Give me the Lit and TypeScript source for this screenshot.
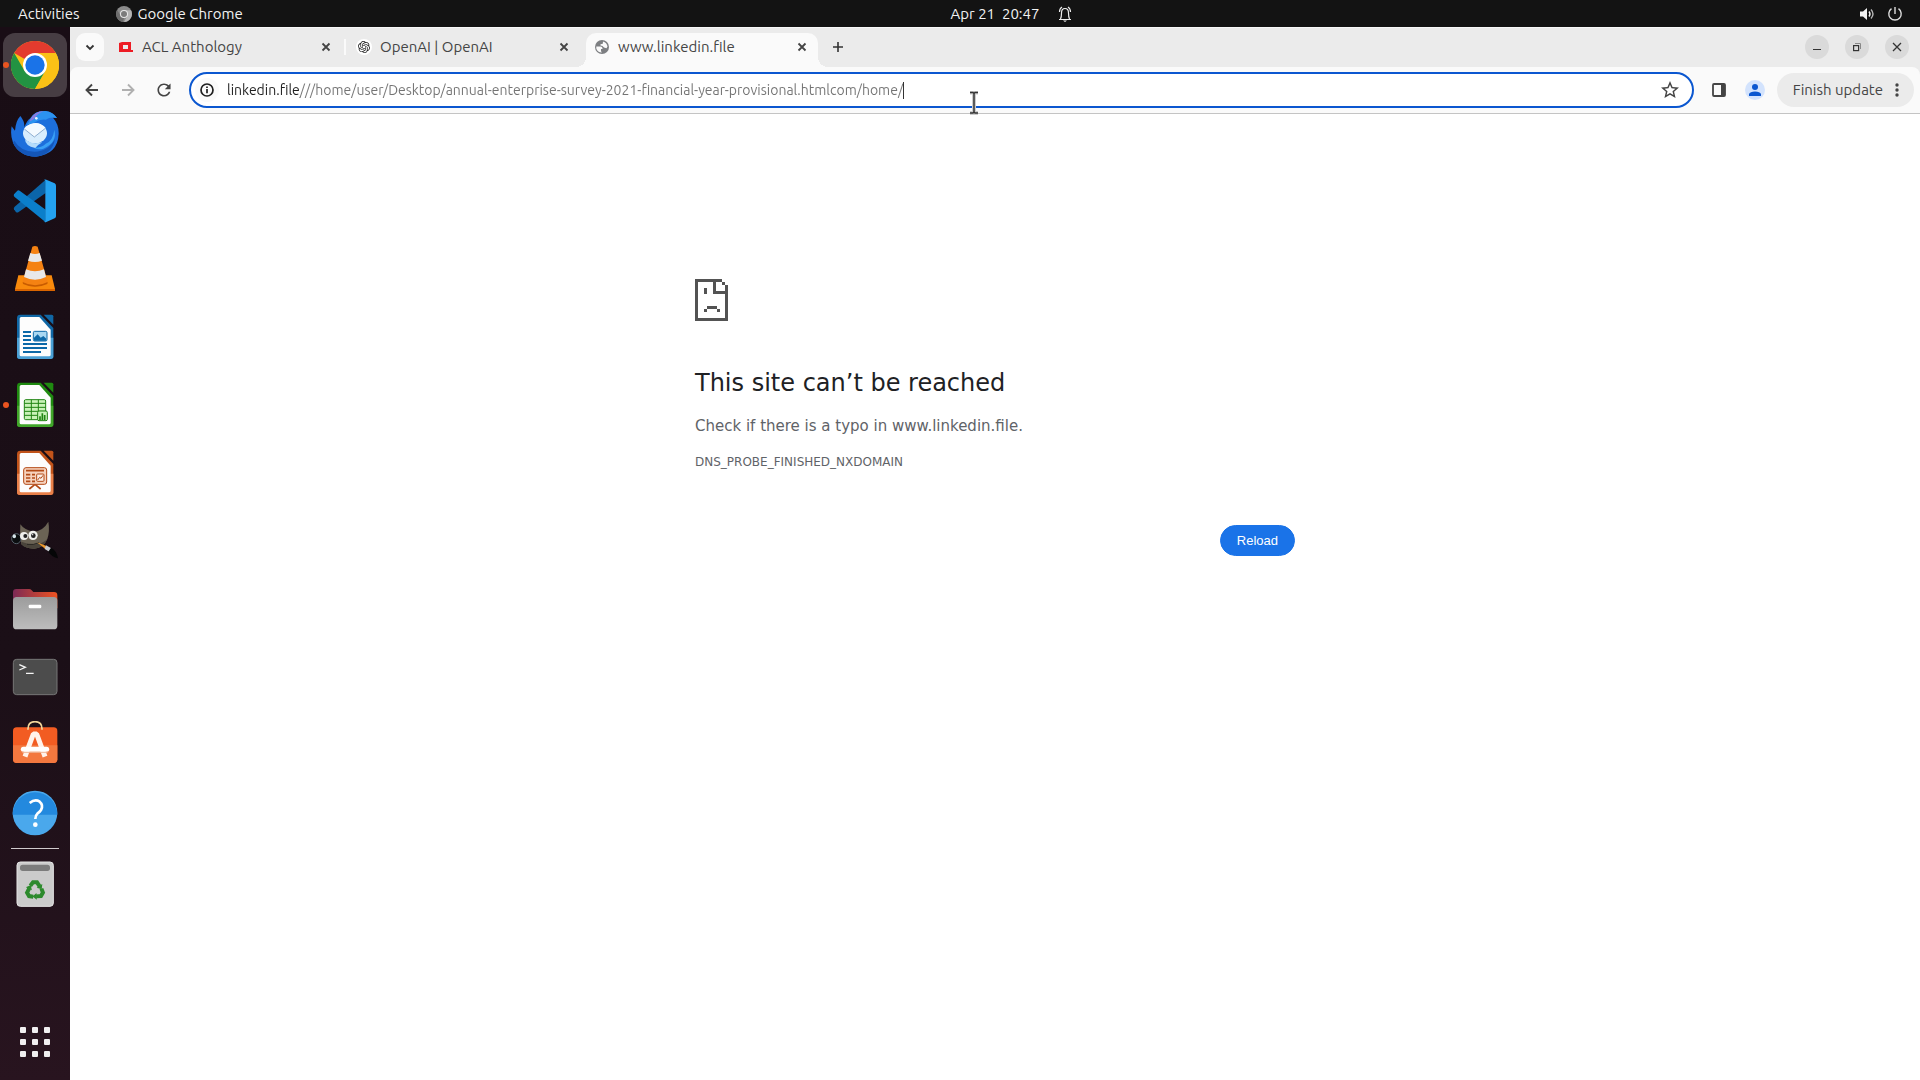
import { LitElement, html, css } from "lit";
import { customElement } from "lit/decorators.js";
import { classMap } from "lit/directives/class-map.js";

const documentIcon = (edge: string, light: string, body: unknown) => html`
  <svg viewBox="0 0 144 144" aria-hidden="true">
    <path d="M28 5H89L127 45V130Q127 138 119 138H26Q18 138 18 130V15Q18 5 28 5Z" fill=${edge} />
    <path d="M18 74H127V130Q127 138 119 138H26Q18 138 18 130Z" fill=${light} />
    <path d="M31 12H85L119 50V125Q119 130 114 130H31Q26 130 26 125V17Q26 12 31 12Z" fill="#fdfdfd" />
    <path d="M98 5H122Q127 5 127 10V35Z" fill=${edge} />
    ${body}
  </svg>
`;

const chromeIcon = html`
  <svg viewBox="0 0 144 144" aria-hidden="true">
    <circle cx="72" cy="72" r="72" fill="#fbc116" />
    <path d="M72 72L9.6 36A72 72 0 0 1 134.4 36H72Z" fill="#e33b2e" />
    <path d="M9.6 36L40.8 90L103.200 90L72 144A72 72 0 0 1 9.6 36Z" fill="#229342" />
    <path d="M134.400 36A72 72 0 0 1 72 144L103.200 90L72 36Z" fill="#fbc116" />
    <circle cx="72" cy="72" r="36" fill="#fff" />
    <circle cx="72" cy="72" r="29" fill="#1a73e8" />
  </svg>
`;

const thunderbirdIcon = html`
  <svg viewBox="0 0 144 144" aria-hidden="true">
    <path d="M28 21Q42 38 40 55Q48 34 58 28Q72 4 104 6Q126 9 138 27L126 26Q144 46 143 75Q140 136 75 143Q25 142 6 101Q-3 77 2 52L12 65Q14 36 28 21Z" fill="#1d6fdc" />
    <path d="M59 27Q73 4 104 6Q126 9 138 27Q118 23 104 32Q86 30 68 42L47 47Q58 38 59 27Z" fill="#2c93f0" />
    <path d="M57 33Q70 6 98 7Q78 14 70 29Q62 35 54 37Z" fill="#8a7be0" />
    <path d="M10 95Q28 127 70 128Q113 127 132 90Q124 137 75 143Q25 142 6 101Z" fill="#1456b8" />
    <path d="M104 104Q126 96 130 62Q140 100 97 119Q82 124 68 116Q94 116 104 104Z" fill="#3aa0f5" />
    <circle cx="76" cy="28" r="4" fill="#e8f4ff" />
    <ellipse cx="72" cy="73" rx="36" ry="30" fill="#d8edfd" />
    <path d="M42 90Q60 108 94 100Q79 108 73 117Q42 111 42 90Z" fill="#b5dcfa" />
    <path d="M39 60L70 84L104 57Q85 36 60 45Q45 50 39 60Z" fill="#f4faff" />
    <path d="M40 60L70 84L103 58" fill="none" stroke="#8eaed0" stroke-width="3" />
  </svg>
`;

const codeIcon = html`
  <svg viewBox="0 0 144 144" aria-hidden="true">
    <path d="M104 8V48L22 106Q18 108 14 104L9 97Q7 93 11 89Z" fill="#0b65a9" />
    <path d="M9 52L19 41Q22 38 27 42L104 98V136L10 59Q7 56 9 52Z" fill="#0b7fcb" />
    <path d="M98 9Q101 6 106 8L131 19Q135 21 135 26V118Q135 122 131 124L106 135Q101 137 98 133Q103 136 103 130V13Q103 8 98 9Z" fill="#24a2f0" />
  </svg>
`;

const vlcIcon = html`
  <svg viewBox="0 0 144 144" aria-hidden="true">
    <path d="M22 91H122L132 132V138H12V132Z" fill="#f98a0c" />
    <path d="M12 132H132V138H12Z" fill="#d96400" />
    <path d="M64 5Q72 1 80 5L110 111Q92 125 72 125Q52 125 35 111Z" fill="#f58212" />
    <path d="M58 24Q72 30 86 24L93 47Q72 55 51 47Z" fill="#e8e8e8" />
    <path d="M45 73Q72 85 99 73L105 96Q72 112 39 96Z" fill="#e8e8e8" />
    <path d="M35 111Q72 131 110 111L109 117Q72 134 36 117Z" fill="#c85c00" />
  </svg>
`;

const writerIcon = documentIcon("#1067a5", "#4a9fd4", html`
  <svg viewBox="0 0 144 144">
    <path d="M36 57H60M36 69H60M36 81H60M36 93H108M36 105H108M36 117H90" stroke="#0d69a8" stroke-width="6" />
    <rect x="67" y="55" width="41" height="29" rx="4" fill="#a9d8f2" stroke="#0d69a8" stroke-width="3" />
    <path d="M69 81V74L80 64L89 74L97 69L106 77V83H69Z" fill="#0d69a8" />
  </svg>
`);

const calcIcon = documentIcon("#1f8a10", "#41a62a", html`
  <svg viewBox="0 0 144 144">
    <rect x="40" y="56" width="64" height="60" rx="4" fill="#c9f2b8" stroke="#208413" stroke-width="3" />
    <path d="M40 67H104M40 79H104M40 91H104M40 103H104M61 56V116M82 56V116" stroke="#208413" stroke-width="3" />
    <rect x="80" y="90" width="29" height="29" rx="4" fill="#c9f2b8" stroke="#208413" stroke-width="3" />
    <path d="M87 117V106M94 117V97M101 117V102" stroke="#208413" stroke-width="5" />
  </svg>
`);

const impressIcon = documentIcon("#c1531a", "#e8804a", html`
  <svg viewBox="0 0 144 144">
    <path d="M72 106L55 120M72 106L89 120" stroke="#b34a17" stroke-width="5" />
    <rect x="38" y="56" width="69" height="50" rx="7" fill="#f6d2bd" stroke="#b34a17" stroke-width="3" />
    <path d="M45 65H99M45 77H58M45 87H58M45 97H58M63 77H72M63 87H72M63 97H72" stroke="#b34a17" stroke-width="5" />
    <rect x="77" y="75" width="22" height="22" rx="3" fill="#fbeee6" stroke="#b34a17" stroke-width="3" />
    <path d="M80 93L86 85L90 88L96 79" fill="none" stroke="#b34a17" stroke-width="3" />
  </svg>
`);

const gimpIcon = html`
  <svg viewBox="0 0 144 144" aria-hidden="true">
    <path d="M28 22Q40 39 67 44Q96 43 112 14Q117 42 109 66Q98 93 70 95Q46 96 31 82Q25 50 28 22Z" fill="#6b6355" />
    <path d="M31 82Q46 96 70 95Q98 93 109 66Q94 82 70 82Q50 82 31 74Z" fill="#4a443b" />
    <ellipse cx="16" cy="65" rx="14" ry="15" fill="#0b0e10" stroke="#55606a" stroke-width="3" />
    <ellipse cx="10" cy="58" rx="5" ry="6" fill="#d7e4ea" />
    <circle cx="39" cy="57" r="12" fill="#f0f0ec" />
    <circle cx="66" cy="55" r="14" fill="#f0f0ec" />
    <circle cx="43" cy="57" r="6" fill="#222" />
    <circle cx="67" cy="56" r="7" fill="#222" />
    <circle cx="65" cy="53" r="2" fill="#fff" />
    <path d="M48 82Q68 85 84 77" fill="none" stroke="#2a2722" stroke-width="3" />
    <path d="M78 76L108 88L103 96Z" fill="#ef9a2c" />
    <path d="M105 85L121 94L115 104L101 96Z" fill="#c9cdd2" />
    <path d="M120 92Q137 100 141 124Q122 119 112 104Z" fill="#050607" />
  </svg>
`;

const filesIcon = html`
  <svg viewBox="0 0 144 144" aria-hidden="true">
    <defs>
      <linearGradient id="folder-back"><stop offset="0" stop-color="#7c2a55" /><stop offset="1" stop-color="#ee5322" /></linearGradient>
      <linearGradient id="folder-front" x2="0" y2="1"><stop offset="0" stop-color="#9c9c9c" /><stop offset="1" stop-color="#bdbdbd" /></linearGradient>
    </defs>
    <path d="M16 12H54Q59 12 62 16L67 21H129Q139 21 139 31V70H6V22Q6 12 16 12Z" fill="url(#folder-back)" />
    <rect x="6" y="36" width="133" height="97" rx="11" fill="url(#folder-front)" />
    <rect x="53" y="59" width="38" height="11" rx="4" fill="#fff" />
  </svg>
`;

const terminalIcon = html`
  <svg viewBox="0 0 144 144" aria-hidden="true">
    <rect x="7" y="19" width="131" height="106" rx="10" fill="#4c4c4c" stroke="#767676" stroke-width="3" />
    <path d="M25 35L43 43L25 51M45 61H68" fill="none" stroke="#f4f4f4" stroke-width="4" />
  </svg>
`;

const softwareIcon = html`
  <svg viewBox="0 0 144 144" aria-hidden="true">
    <rect x="6" y="19" width="133" height="107" rx="11" fill="#f25c22" />
    <path d="M6 73H139V115Q139 126 128 126H17Q6 126 6 115Z" fill="#f3783f" />
    <path d="M51 26Q50 2 72 2Q94 2 93 26" fill="none" stroke="#f3d79b" stroke-width="5" />
    <path d="M42 107L67 39H77L102 107" fill="none" stroke="#fff3ec" stroke-width="15" stroke-linejoin="bevel" />
    <path d="M37 85H107" stroke="#fff" stroke-width="15" stroke-linecap="round" />
    <path d="M34 94H110" stroke="#f0b596" stroke-width="3" />
  </svg>
`;

const helpIcon = html`
  <svg viewBox="0 0 144 144" aria-hidden="true">
    <circle cx="72" cy="72" r="67" fill="#4aa8ec" />
    <path d="M5 77A67 67 0 1 1 139 77Z" fill="#2389de" />
    <path d="M56 42Q72 29 86 38Q98 48 90 63Q87 68 79 74Q73 79 73 90" fill="none" stroke="#fff" stroke-width="8" />
    <circle cx="73" cy="107" r="7" fill="#fff" />
  </svg>
`;

const trashIcon = html`
  <svg viewBox="0 0 144 144" aria-hidden="true">
    <rect x="18" y="6" width="109" height="133" rx="10" fill="#cbcbcb" stroke="#e6e6e6" stroke-width="3" />
    <rect x="27" y="14" width="90" height="19" rx="8" fill="#7c7c7c" />
    <g fill="none" stroke="#2c8a2c" stroke-width="12">
      <path d="M58 77L66 67H78L86 79" />
      <path d="M58 77L66 67H78L86 79" transform="rotate(120 72 91)" />
      <path d="M58 77L66 67H78L86 79" transform="rotate(240 72 91)" />
    </g>
    <g fill="#2c8a2c">
      <path d="M94 72L92 88L77 83Z" />
      <path d="M94 72L92 88L77 83Z" transform="rotate(120 72 91)" />
      <path d="M94 72L92 88L77 83Z" transform="rotate(240 72 91)" />
    </g>
  </svg>
`;

const closeIcon = html`
  <svg class="glyph" viewBox="0 0 16 16" aria-hidden="true">
    <path d="M4.500 4.500L11.500 11.500M11.500 4.500L4.500 11.500" stroke="#444" stroke-width="1.800" />
  </svg>
`;

const aclIcon = html`
  <svg class="glyph" viewBox="0 0 16 16" aria-hidden="true">
    <path d="M1 4L4 3H13V11H15V13H1ZM5 6V10H10V6Z" fill="#ed1c24" fill-rule="evenodd" />
  </svg>
`;

const openaiIcon = html`
  <svg class="glyph" viewBox="0 0 16 16" aria-hidden="true">
    <circle cx="8" cy="8" r="8" fill="#fff" />
    <path
      transform="translate(2 2) scale(0.500)"
      fill="#222"
      d="M22.2819 9.8211a5.9847 5.9847 0 0 0-.5157-4.9108 6.0462 6.0462 0 0 0-6.5098-2.9A6.0651 6.0651 0 0 0 4.9807 4.1818a5.9847 5.9847 0 0 0-3.9977 2.9 6.0462 6.0462 0 0 0 .7427 7.0966 5.98 5.98 0 0 0 .511 4.9107 6.051 6.051 0 0 0 6.5146 2.9001A5.9847 5.9847 0 0 0 13.2599 24a6.0557 6.0557 0 0 0 5.7718-4.2058 5.9894 5.9894 0 0 0 3.9977-2.9001 6.0557 6.0557 0 0 0-.7475-7.0729zm-9.022 12.6081a4.4755 4.4755 0 0 1-2.8764-1.0408l.1419-.0804 4.7783-2.7582a.7948.7948 0 0 0 .3927-.6813v-6.7369l2.02 1.1686a.071.071 0 0 1 .038.052v5.5826a4.504 4.504 0 0 1-4.4945 4.4944zm-9.6607-4.1254a4.4708 4.4708 0 0 1-.5346-3.0137l.142.0852 4.783 2.7582a.7712.7712 0 0 0 .7806 0l5.8428-3.3685v2.3324a.0804.0804 0 0 1-.0332.0615L9.74 19.9502a4.4992 4.4992 0 0 1-6.1408-1.6464zM2.3408 7.8956a4.485 4.485 0 0 1 2.3655-1.9728V11.6a.7664.7664 0 0 0 .3879.6765l5.8144 3.3543-2.0201 1.1685a.0757.0757 0 0 1-.071 0l-4.8303-2.7865A4.504 4.504 0 0 1 2.3408 7.872zm16.5963 3.8558L13.1038 8.364 15.1192 7.2a.0757.0757 0 0 1 .071 0l4.8303 2.7913a4.4944 4.4944 0 0 1-.6765 8.1042v-5.6772a.79.79 0 0 0-.407-.667zm2.0107-3.0231l-.142-.0852-4.7735-2.7818a.7759.7759 0 0 0-.7854 0L9.409 9.2297V6.8974a.0662.0662 0 0 1 .0284-.0615l4.8303-2.7866a4.4992 4.4992 0 0 1 6.6802 4.66zM8.3065 12.863l-2.02-1.1638a.0804.0804 0 0 1-.038-.0567V6.0742a4.4992 4.4992 0 0 1 7.3757-3.4537l-.142.0805L8.704 5.459a.7948.7948 0 0 0-.3927.6813zm1.0976-2.3654l2.602-1.4998 2.6069 1.4998v2.9994l-2.5974 1.4997-2.6067-1.4997Z"
    />
  </svg>
`;

const globeIcon = html`
  <svg class="glyph" viewBox="0 0 16 16" aria-hidden="true">
    <circle cx="8" cy="8" r="7" fill="#7d7f82" />
    <path d="M2.300 7.500H6.500Q8.500 7.500 8.500 9.500V10H7V12.300L8 13.500Q3.500 13.500 2.300 9.500Z" fill="#fafafa" />
    <path d="M9 2.500Q12.800 3.600 13.500 7.500L12.500 9.300L10 8.500L8.500 7L6.500 6.500V5.300L8.800 4.800Z" fill="#fafafa" />
  </svg>
`;

interface DockApp { name: string; icon: unknown; active?: boolean; running?: boolean }
interface Tab { title: string; icon: unknown; active?: boolean }

const apps: DockApp[] = [
  { name: "Google Chrome", icon: chromeIcon, active: true, running: true },
  { name: "Thunderbird Mail", icon: thunderbirdIcon },
  { name: "Visual Studio Code", icon: codeIcon },
  { name: "VLC media player", icon: vlcIcon },
  { name: "LibreOffice Writer", icon: writerIcon },
  { name: "LibreOffice Calc", icon: calcIcon, running: true },
  { name: "LibreOffice Impress", icon: impressIcon },
  { name: "GIMP", icon: gimpIcon },
  { name: "Files", icon: filesIcon },
  { name: "Terminal", icon: terminalIcon },
  { name: "Ubuntu Software", icon: softwareIcon },
  { name: "Help", icon: helpIcon },
];

const tabs: Tab[] = [
  { title: "ACL Anthology", icon: aclIcon },
  { title: "OpenAI | OpenAI", icon: openaiIcon },
  { title: "www.linkedin.file", icon: globeIcon, active: true },
];

const shared = css`
  :host, * { box-sizing: border-box; }
  button {
    margin: 0;
    padding: 0;
    border: 0;
    background: none;
    color: inherit;
    font: inherit;
    display: flex;
    align-items: center;
    justify-content: center;
    flex: none;
  }
  svg { display: block; }
`;

@customElement("system-bar")
class SystemBar extends LitElement {
  static styles = [shared, css`
    :host {
      display: grid;
      grid-template-columns: 1fr auto 1fr;
      align-items: center;
      height: 27px;
      background: #131313;
      color: #f2f2f2;
      font-size: 15px;
      line-height: 20px;
    }
    .left { display: flex; gap: 36px; padding-left: 18px; }
    .app { gap: 6px; }
    .center { gap: 18px; padding-left: 104px; white-space: pre; }
    .right { justify-self: end; gap: 12px; padding-right: 17px; }
  `];

  render() {
    return html`
      <div class="left">
        <button>Activities</button>
        <button class="app">
          <svg width="16" height="16" viewBox="0 0 16 16" aria-hidden="true">
            <circle cx="8" cy="8" r="8" fill="#8b8b8b" />
            <path d="M8 4.200H15A8 8 0 0 1 8 16L11.300 10Z" fill="#b5b5b5" />
            <path d="M1.200 4L4.700 10L8 12L7 16A8 8 0 0 1 1.200 4Z" fill="#6d6d6d" />
            <circle cx="8" cy="8" r="4" fill="#e8e8e8" />
            <circle cx="8" cy="8" r="3" fill="#7b7b7b" />
          </svg>
          Google Chrome
        </button>
      </div>
      <button class="center">Apr 21  20:47<svg width="16" height="16" viewBox="0 0 16 16" aria-hidden="true">
          <path d="M2 13.500H14M3.500 13Q4.500 11 4.500 7Q4.500 2.500 8 2.500Q11.500 2.500 11.500 7Q11.500 11 12.500 13M2.500 6Q2.500 2.500 5 1M13.500 6Q13.500 2.500 11 1" fill="none" stroke="#eee" stroke-width="1.200" />
          <path d="M6 14.500H10L8 16Z" fill="#eee" />
        </svg></button>
      <button class="right" aria-label="System menu">
        <svg width="16" height="16" viewBox="0 0 16 16" aria-hidden="true">
          <path d="M1 5.500H4L8 2V14L4 10.500H1Z" fill="#f2f2f2" />
          <path d="M10 5.500Q12 8 10 10.500" fill="none" stroke="#f2f2f2" stroke-width="1.400" />
          <path d="M12 3.500Q16 8 12 12.500" fill="none" stroke="#b5b5b5" stroke-width="1.400" />
        </svg>
        <svg width="16" height="16" viewBox="0 0 16 16" aria-hidden="true">
          <path d="M4.500 2.700A6.200 6.200 0 1 0 11.500 2.700M8 1V8" fill="none" stroke="#ddd" stroke-width="1.400" />
        </svg>
      </button>
    `;
  }
}

@customElement("app-dock")
class AppDock extends LitElement {
  static styles = [shared, css`
    :host {
      display: flex;
      flex-direction: column;
      width: 70px;
      padding: 4px 0;
      background: linear-gradient(#190d15, #1b0f17 60%, #28141f);
    }
    .slot { position: relative; display: flex; justify-content: center; padding: 2px 0; }
    .tile { width: 64px; height: 64px; border-radius: 12px; }
    .tile > svg { width: 48px; height: 48px; }
    .tile.active { background: #473d43; }
    .dot {
      position: absolute;
      left: 3px;
      top: 31px;
      width: 6px;
      height: 6px;
      border-radius: 50%;
      background: #e95420;
    }
    .rule { height: 1px; margin: 1px 11px; background: #cfcbcd; }
    .spacer { flex: 1; }
  `];

  render() {
    return html`
      ${apps.map((app) => html`
        <div class="slot">
          <button class=${classMap({ tile: true, active: !!app.active })} aria-label=${app.name}>${app.icon}</button>
          ${app.running ? html`<span class="dot"></span>` : null}
        </div>
      `)}
      <div class="rule"></div>
      <div class="slot"><button class="tile" aria-label="Trash">${trashIcon}</button></div>
      <div class="spacer"></div>
      <div class="slot">
        <button class="tile" aria-label="Show Applications">
          <svg viewBox="0 0 48 48" aria-hidden="true">
            ${[9, 21, 33].map((y) => [9, 21, 33].map((x) => html`<svg><rect x=${x} y=${y} width="6" height="6" rx="1" fill="#f1eff0" /></svg>`))}
          </svg>
        </button>
      </div>
    `;
  }
}

@customElement("tab-strip")
class TabStrip extends LitElement {
  static styles = [shared, css`
    :host {
      display: flex;
      align-items: flex-start;
      height: 40px;
      padding: 5px 11px 0 6px;
      border-top: 1px solid #f7f7f7;
      background: #ebebeb;
      color: #454545;
      font-size: 15px;
      line-height: 20px;
    }
    .glyph { width: 16px; height: 16px; flex: none; }
    .search { width: 28px; height: 28px; margin-right: 6px; border-radius: 9px; background: #fafafa; }
    .tabs { display: flex; gap: 6px; }
    .tab {
      position: relative;
      display: flex;
      align-items: center;
      gap: 8px;
      width: 232px;
      height: 34px;
      padding: 0 8px 6px;
    }
    .title { flex: 1; white-space: nowrap; }
    .divided::after {
      content: "";
      position: absolute;
      left: 234px;
      top: 6px;
      width: 2px;
      height: 16px;
      background: #fafafa;
    }
    .active { border-radius: 10px 10px 0 0; background: #fafafa; }
    .active::before, .active::after {
      content: "";
      position: absolute;
      bottom: 0;
      width: 10px;
      height: 10px;
    }
    .active::before { left: -10px; background: radial-gradient(circle at 0 0, transparent 10px, #fafafa 10px); }
    .active::after { right: -10px; background: radial-gradient(circle at 100% 0, transparent 10px, #fafafa 10px); }
    .add { width: 28px; height: 28px; margin-left: 6px; }
    .controls { display: flex; gap: 16px; margin-left: auto; padding: 2px 0; }
    .control { width: 24px; height: 24px; border-radius: 50%; background: #dadada; }
  `];

  render() {
    return html`
      <button class="search" aria-label="Search tabs">
        <svg width="16" height="16" viewBox="0 0 16 16" aria-hidden="true">
          <path d="M4.500 6.500L8 10L11.500 6.500" fill="none" stroke="#333" stroke-width="1.800" />
        </svg>
      </button>
      <div class="tabs" role="tablist">
        ${tabs.map((tab, i) => html`
          <div class=${classMap({ tab: true, active: !!tab.active, divided: i === 0 })} role="tab" aria-selected=${tab.active ? "true" : "false"}>
            ${tab.icon}
            <span class="title">${tab.title}</span>
            <button aria-label="Close tab">${closeIcon}</button>
          </div>
        `)}
      </div>
      <button class="add" aria-label="New tab">
        <svg width="16" height="16" viewBox="0 0 16 16" aria-hidden="true">
          <path d="M8 3V13M3 8H13" stroke="#333" stroke-width="1.600" />
        </svg>
      </button>
      <div class="controls">
        <button class="control" aria-label="Minimize">
          <svg class="glyph" viewBox="0 0 16 16" aria-hidden="true"><path d="M4 10.500H12" stroke="#333" /></svg>
        </button>
        <button class="control" aria-label="Restore">
          <svg class="glyph" viewBox="0 0 16 16" aria-hidden="true">
            <path d="M6 4.500H11.500V10" fill="none" stroke="#888" />
            <rect x="4.600" y="6.600" width="5" height="5" fill="none" stroke="#333" stroke-width="1.200" />
          </svg>
        </button>
        <button class="control" aria-label="Close window">
          <svg class="glyph" viewBox="0 0 16 16" aria-hidden="true"><path d="M4 4L12 12M12 4L4 12" stroke="#333" stroke-width="1.300" /></svg>
        </button>
      </div>
    `;
  }
}

@customElement("tool-bar")
class ToolBar extends LitElement {
  static styles = [shared, css`
    :host { display: block; background: #ebebeb; }
    .bar {
      display: flex;
      align-items: center;
      height: 47px;
      padding: 0 6px 0 12px;
      border-bottom: 1px solid #c4c4c4;
      border-radius: 8px 8px 0 0;
      background: #fafafa;
      color: #454545;
      font-size: 15px;
      line-height: 20px;
    }
    .nav { display: flex; gap: 16px; }
    .icon { width: 20px; height: 20px; }
    .address {
      position: relative;
      display: flex;
      flex: 1;
      align-items: center;
      height: 36px;
      margin-left: 15px;
      padding: 0 13px 0 4px;
      border: 2px solid #0b57d0;
      border-radius: 18px;
      background: #fff;
    }
    .info { width: 24px; height: 24px; border-radius: 50%; background: #fafafa; }
    .url {
      --host-width: 73px;
      field-sizing: content;
      margin: 0 0 0 8px;
      padding: 0;
      border: 0;
      outline: 0;
      font: inherit;
      font-size: 14px;
      color: transparent;
      background: linear-gradient(90deg, #1f1f1f var(--host-width), #737373 var(--host-width));
      background-clip: text;
      -webkit-background-clip: text;
    }
    .caret { width: 1px; height: 17px; background: #333; }
    .star { margin-left: auto; }
    .pointer { position: absolute; left: 778px; top: 17px; }
    .panel { margin-left: 15px; }
    .avatar { margin: 0 12px 0 16px; }
    .update {
      gap: 6px;
      height: 34px;
      padding: 0 9px 0 16px;
      border-radius: 17px;
      background: #ebebeb;
    }
  `];

  render() {
    return html`
      <div class="bar">
        <div class="nav">
          <button aria-label="Back">
            <svg class="icon" viewBox="0 0 20 20" aria-hidden="true"><path d="M16 10H5M10 4.500L4.500 10L10 15.500" fill="none" stroke="#444" stroke-width="1.900" /></svg>
          </button>
          <button aria-label="Forward" disabled>
            <svg class="icon" viewBox="0 0 20 20" aria-hidden="true"><path d="M4 10H15M10 4.500L15.500 10L10 15.500" fill="none" stroke="#b0b0b0" stroke-width="1.900" /></svg>
          </button>
          <button aria-label="Reload page">
            <svg class="icon" viewBox="2 2 20 20" aria-hidden="true"><path d="M17.650 6.350C16.200 4.900 14.210 4 12 4c-4.420 0-7.990 3.580-7.990 8s3.570 8 7.990 8c3.730 0 6.840-2.550 7.730-6h-2.080c-.82 2.330-3.040 4-5.650 4-3.310 0-6-2.690-6-6s2.690-6 6-6c1.660 0 3.140.69 4.220 1.780L13 11h7V4l-2.350 2.350z" transform="translate(12 12) scale(0.820) translate(-12 -12)" fill="#444" /></svg>
          </button>
        </div>
        <div class="address">
          <button class="info" aria-label="View site information">
            <svg width="16" height="16" viewBox="0 0 16 16" aria-hidden="true">
              <circle cx="8" cy="8" r="6" fill="none" stroke="#1f1f1f" stroke-width="1.700" />
              <path d="M8 7V11.300M8 4.500V6" stroke="#1f1f1f" stroke-width="1.700" />
            </svg>
          </button>
          <input class="url" type="text" aria-label="Address and search bar" spellcheck="false"
            value="linkedin.file///home/user/Desktop/annual-enterprise-survey-2021-financial-year-provisional.htmlcom/home/" />
          <span class="caret"></span>
          <button class="star" aria-label="Bookmark this tab">
            <svg width="18" height="18" viewBox="2 2 20 20" aria-hidden="true"><path fill="#444" d="M22 9.240l-7.190-.62L12 2 9.190 8.630 2 9.240l5.460 4.730L5.820 21 12 17.270 18.180 21l-1.630-7.030L22 9.240zM12 15.400l-3.760 2.270 1-4.280-3.320-2.880 4.380-.38L12 6.100l1.710 4.040 4.380.38-3.320 2.880 1 4.280L12 15.400z" /></svg>
          </button>
          <svg class="pointer" width="10" height="24" viewBox="0 0 10 24" aria-hidden="true">
            <path d="M1 1.500H4L5 2.500L6 1.500H9M5 2V21.500M1 22H4L5 21L6 22H9" fill="none" stroke="#ccc" stroke-width="4" />
            <path d="M1 1.500H4L5 2.500L6 1.500H9M5 2V21.500M1 22H4L5 21L6 22H9" fill="none" stroke="#333" stroke-width="1.500" />
          </svg>
        </div>
        <button class="panel" aria-label="Side panel">
          <svg class="icon" viewBox="0 0 20 20" aria-hidden="true">
            <rect x="4" y="4" width="12" height="12" fill="none" stroke="#444" stroke-width="1.800" rx="1" />
            <path d="M12 4H16V16H12Z" fill="#444" />
          </svg>
        </button>
        <button class="avatar" aria-label="Profile">
          <svg class="icon" viewBox="0 0 20 20" aria-hidden="true">
            <circle cx="10" cy="10" r="10" fill="#d3e3fd" />
            <circle cx="10" cy="7" r="3" fill="#0b57d0" />
            <path d="M4 16V14Q5 11.500 10 11.500Q15 11.500 16 14V16Z" fill="#0b57d0" />
          </svg>
        </button>
        <button class="update">
          Finish update
          <svg width="16" height="16" viewBox="0 0 16 16" aria-hidden="true">
            <g fill="#444"><circle cx="8" cy="3" r="1.700" /><circle cx="8" cy="8" r="1.700" /><circle cx="8" cy="13" r="1.700" /></g>
          </svg>
        </button>
      </div>
    `;
  }
}

@customElement("error-page")
class ErrorPage extends LitElement {
  static styles = [shared, css`
    :host {
      display: block;
      flex: 1;
      padding: 165px 24px 0;
      background: #fff;
      color: #5f6368;
      font-family: "DejaVu Sans", sans-serif;
    }
    .content { display: flex; flex-direction: column; max-width: 600px; margin: 0 auto; }
    .heading { margin: 47px 0 16px; color: #202124; font-size: 24px; font-weight: 400; line-height: 30px; }
    .summary { margin: 0 0 16px; font-size: 15px; line-height: 24px; }
    .code { margin: 0 0 55px; font-size: 12px; line-height: 16px; }
    .reload {
      align-self: flex-end;
      height: 31px;
      padding: 0 16px;
      border: 1px solid #1a73e8;
      border-radius: 16px;
      background: #1a73e8;
      color: #fff;
      font-family: "Liberation Sans", Arial, sans-serif;
      font-size: 13px;
    }
  `];

  render() {
    return html`
      <main class="content">
        <svg width="33" height="42" viewBox="0 0 33 42" shape-rendering="crispEdges" aria-hidden="true">
          <path d="M0 0H27V3H21V12H33V42H0ZM3 3V39H30V15H18V3Z" fill="#535353" fill-rule="evenodd" />
          <path d="M27 3H30V6H27ZM30 6H33V12H30ZM9 9H12V15H9ZM12 27H22V30H12ZM9 30H12V33H9ZM22 30H25V33H22Z" fill="#535353" />
        </svg>
        <h1 class="heading">This site can’t be reached</h1>
        <p class="summary">Check if there is a typo in www.linkedin.file.</p>
        <p class="code">DNS_PROBE_FINISHED_NXDOMAIN</p>
        <button class="reload">Reload</button>
      </main>
    `;
  }
}

@customElement("app-root")
class AppRoot extends LitElement {
  static styles = css`
    :host {
      display: flex;
      flex-direction: column;
      min-height: 100vh;
      font-family: Ubuntu, "Noto Sans", sans-serif;
    }
    .desktop { display: flex; flex: 1; }
    .window { display: flex; flex: 1; flex-direction: column; min-width: 0; }
  `;

  render() {
    return html`
      <system-bar></system-bar>
      <div class="desktop">
        <app-dock></app-dock>
        <div class="window">
          <tab-strip></tab-strip>
          <tool-bar></tool-bar>
          <error-page></error-page>
        </div>
      </div>
    `;
  }
}
